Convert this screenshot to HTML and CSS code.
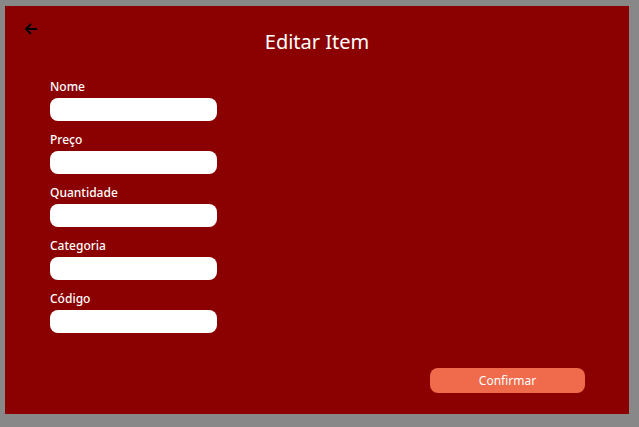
FILE: index.html
```html
<!DOCTYPE html>
<html lang="pt">
<head>
<meta charset="utf-8">
<link rel="stylesheet" href="styles.css">
</head>
<body>
<div class="screen">
  <header class="header">
    <button class="back" aria-label="Voltar">
      <svg width="14" height="14" viewBox="0 0 14 14"><path d="M13 7H2M7 2L2 7l5 5" fill="none" stroke="#000" stroke-width="2"/></svg>
    </button>
    <h1 class="title">Editar Item</h1>
  </header>
  <form class="form">
    <label class="field"><span class="label">Nome</span><input class="input" type="text"></label>
    <label class="field"><span class="label">Preço</span><input class="input" type="text"></label>
    <label class="field"><span class="label">Quantidade</span><input class="input" type="text"></label>
    <label class="field"><span class="label">Categoria</span><input class="input" type="text"></label>
    <label class="field"><span class="label">Código</span><input class="input" type="text"></label>
  </form>
  <div class="actions">
    <button class="confirm" type="button">Confirmar</button>
  </div>
</div>
</body>
</html>
```
FILE: styles.css
```css
* { box-sizing: border-box; }
html, body { margin: 0; padding: 0; }
body {
  background: #888888;
  width: 639px;
  height: 427px;
  padding: 6px 10px 13px 5px;
  font-family: "Noto Sans", sans-serif;
}
.screen {
  background: #8b0000;
  width: 624px;
  height: 408px;
  display: flex;
  flex-direction: column;
  position: relative;
}
.header {
  height: 72px;
  display: flex;
  align-items: flex-start;
  justify-content: center;
  position: relative;
}
.back {
  position: absolute;
  left: 19px;
  top: 16px;
  background: none;
  border: 0;
  padding: 0;
  width: 14px;
  height: 14px;
  display: flex;
}
.title {
  margin: 0;
  margin-top: 22px;
  font-size: 20px;
  font-weight: 400;
  line-height: 28px;
  color: #ffffff;
}
.form {
  display: flex;
  flex-direction: column;
  gap: 10px;
  padding-left: 45px;
}
.field {
  display: flex;
  flex-direction: column;
  gap: 3px;
}
.label {
  font-size: 12px;
  line-height: 17px;
  color: #ffffff;
  font-weight: 500;
}
.input {
  width: 167px;
  height: 23px;
  border: 0;
  border-radius: 8px;
  background: #ffffff;
  margin: 0;
}
.actions {
  margin-top: auto;
  display: flex;
  justify-content: flex-end;
  padding: 0 44px 21px 0;
}
.confirm {
  width: 155px;
  height: 25px;
  border: 0;
  border-radius: 8px;
  background: #f06b4b;
  color: #ffffff;
  font-family: "Noto Sans", sans-serif;
  font-size: 12px;
  padding: 0;
}
```
